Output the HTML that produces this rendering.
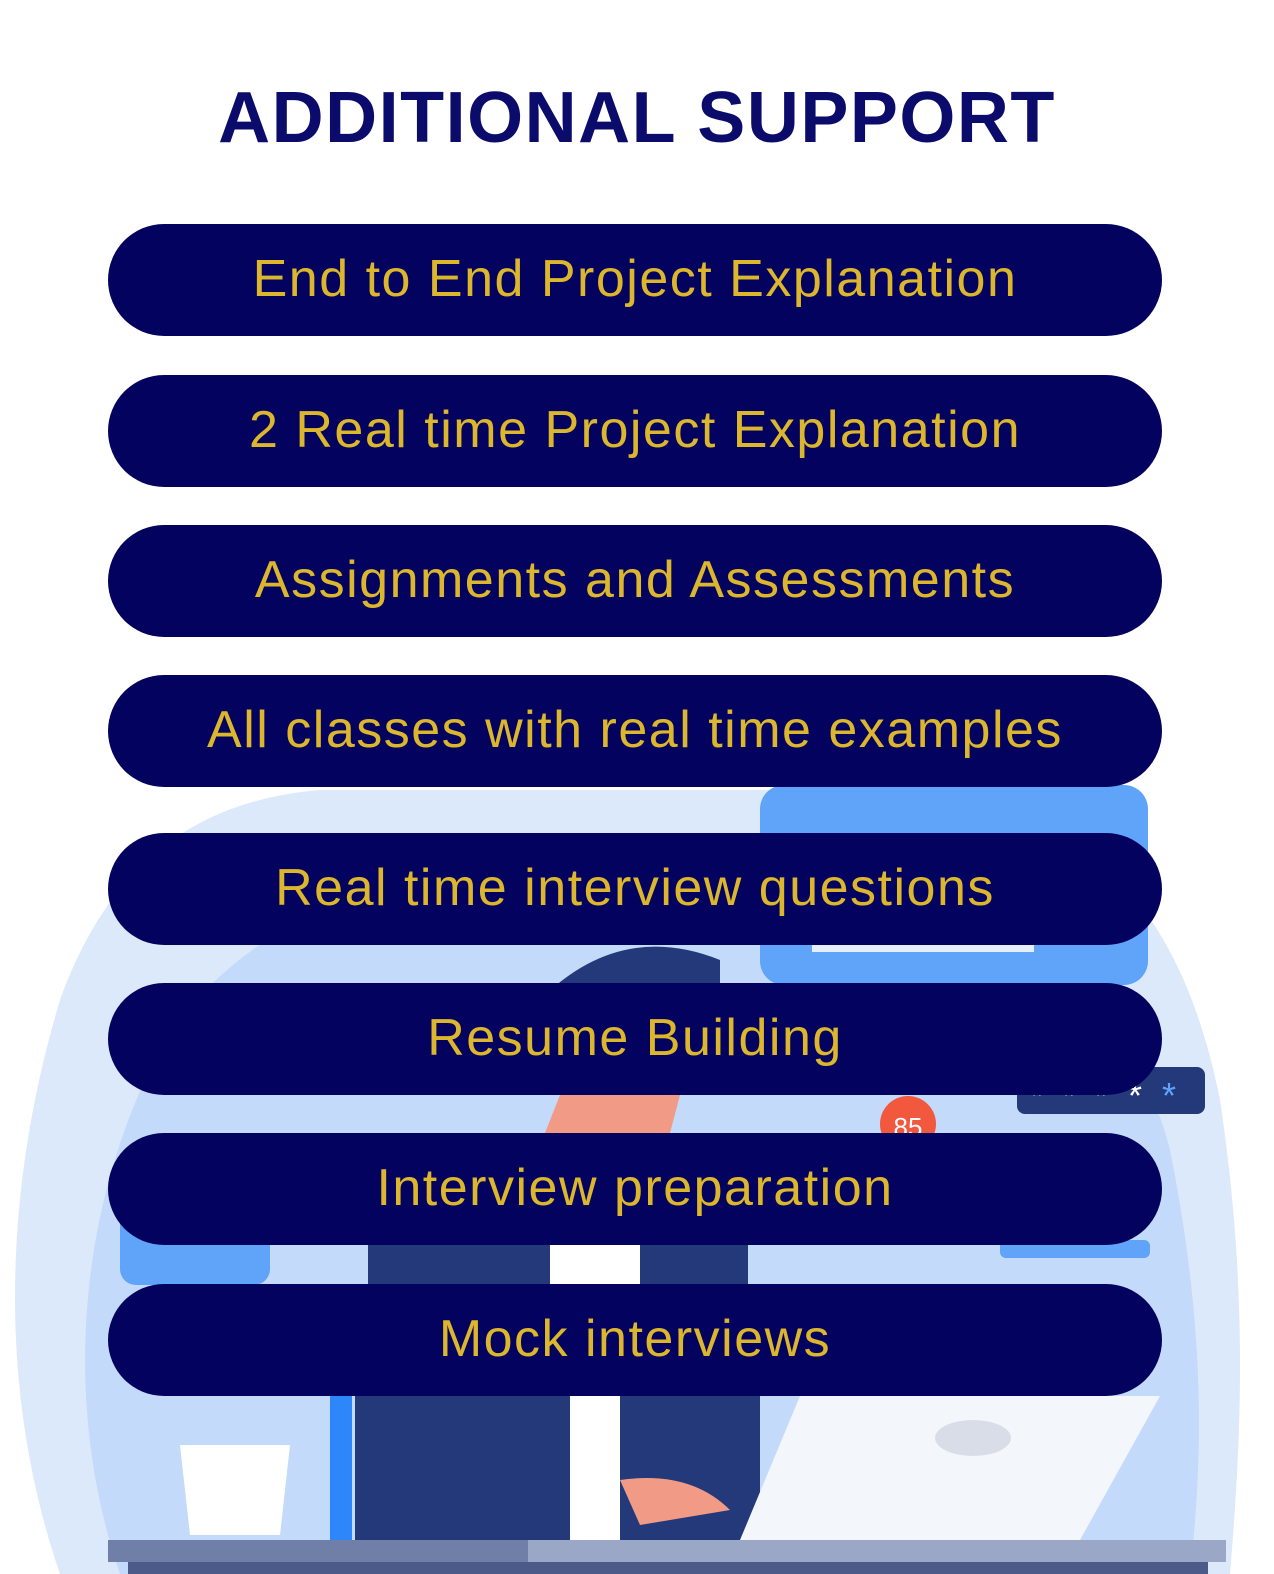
<!DOCTYPE html>
<html><head><meta charset="utf-8"><style>
html,body{margin:0;padding:0;background:#fff;}
body{width:1274px;height:1574px;position:relative;overflow:hidden;font-family:"Liberation Sans",sans-serif;}
h1{position:absolute;top:78px;left:0;width:1274px;text-align:center;margin:0;font-size:72px;font-weight:bold;color:#0b0b6b;letter-spacing:1.5px;line-height:80px;}
.p{position:absolute;left:108px;width:1054px;height:112px;border-radius:56px;background:#03035f;color:#dcb62c;font-size:52px;text-align:center;line-height:110px;letter-spacing:1.5px;}
svg{position:absolute;left:0;top:0;}
</style></head><body>
<svg width="1274" height="1574" viewBox="0 0 1274 1574">
<path d="M60 1574 C0 1400 0 1200 60 1000 C110 860 200 800 320 790 L900 790 C1080 800 1180 900 1220 1100 C1250 1300 1240 1450 1230 1574 Z" fill="#dce9fb"/>
<path d="M120 1574 C60 1400 80 1200 160 1050 C260 880 500 840 700 850 C900 860 1120 950 1170 1150 C1210 1350 1200 1480 1190 1574 Z" fill="#c3dafa"/>
<rect x="760" y="785" width="388" height="200" rx="24" fill="#5fa4f9"/>
<rect x="812" y="942" width="222" height="10" fill="#e6eefa"/>
<rect x="1000" y="1240" width="150" height="18" rx="6" fill="#5fa4f9"/>
<rect x="120" y="1150" width="150" height="135" rx="16" fill="#5fa4f9"/>
<path d="M540 1000 Q620 920 720 960 L720 990 L540 990Z" fill="#24397a"/>
<path d="M560 1095 L680 1095 L670 1133 L545 1133Z" fill="#f19b87"/>
<circle cx="908" cy="1124" r="28" fill="#f2583e"/>
<text x="908" y="1136" font-size="26" fill="#fff" text-anchor="middle" font-family="Liberation Sans">85</text>
<rect x="1017" y="1067" width="188" height="47" rx="8" fill="#24397a"/>
<text x="1030" y="1108" font-size="36" fill="#fff" font-family="Liberation Sans">*</text>
<text x="1062" y="1108" font-size="36" fill="#fff" font-family="Liberation Sans">*</text>
<text x="1094" y="1108" font-size="36" fill="#fff" font-family="Liberation Sans">*</text>
<text x="1128" y="1108" font-size="36" fill="#fff" font-family="Liberation Sans">*</text>
<text x="1162" y="1108" font-size="36" fill="#5fa4f9" font-family="Liberation Sans">*</text>
<path d="M355 1396 L355 1540 L760 1540 L760 1396 Z" fill="#24397a"/>
<rect x="570" y="1396" width="50" height="144" fill="#fff"/>
<path d="M800 1396 L1160 1396 L1080 1540 L740 1540 Z" fill="#f3f6fb"/>
<ellipse cx="973" cy="1438" rx="38" ry="18" fill="#d8dde8"/>
<path d="M620 1480 Q690 1470 730 1510 L640 1525Z" fill="#f19b87"/>
<path d="M180 1445 L290 1445 L280 1535 L190 1535 Z" fill="#fff"/>
<rect x="330" y="1396" width="22" height="144" fill="#2e86fb"/>
<rect x="108" y="1540" width="1118" height="22" fill="#6f7fa8"/>
<rect x="528" y="1540" width="698" height="22" fill="#9aa7c6"/>
<rect x="128" y="1562" width="1080" height="12" fill="#4b5a88"/>
<rect x="368" y="1245" width="380" height="39" fill="#24397a"/>
<rect x="550" y="1245" width="90" height="39" fill="#fff"/>
</svg>
<h1>ADDITIONAL SUPPORT</h1>
<div class="p" style="top:224px">End to End Project Explanation</div>
<div class="p" style="top:375px">2 Real time Project Explanation</div>
<div class="p" style="top:525px">Assignments and Assessments</div>
<div class="p" style="top:675px">All classes with real time examples</div>
<div class="p" style="top:833px">Real time interview questions</div>
<div class="p" style="top:983px">Resume Building</div>
<div class="p" style="top:1133px">Interview preparation</div>
<div class="p" style="top:1284px">Mock interviews</div>
</body></html>
